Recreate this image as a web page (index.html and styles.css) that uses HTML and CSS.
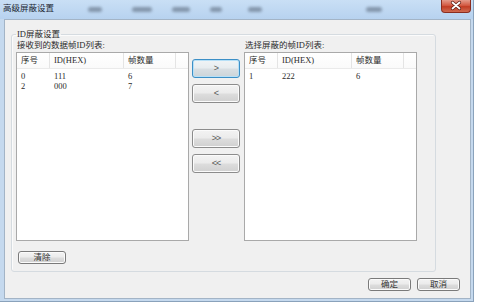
FILE: index.html
```html
<!DOCTYPE html>
<html lang="zh-CN">
<head>
<meta charset="utf-8">
<title>高级屏蔽设置</title>
<link rel="stylesheet" href="styles.css">
</head>
<body>
<div class="window">
  <div class="titlebar">
    <span class="title">高级屏蔽设置</span>
    <span class="blob b1"></span>
    <span class="blob b2"></span>
    <span class="blob b3"></span>
    <span class="blob b4"></span>
    <span class="blob b5"></span>
    <span class="blob b6"></span>
    <span class="close">
      <svg width="30" height="13" viewBox="0 0 30 13">
        <path d="M11.5 3.5 L18.5 9.5 M18.5 3.5 L11.5 9.5" stroke="#5a1a10" stroke-width="3.2" stroke-linecap="round"/>
        <path d="M11.5 3.5 L18.5 9.5 M18.5 3.5 L11.5 9.5" stroke="#ffffff" stroke-width="1.8" stroke-linecap="round"/>
      </svg>
    </span>
  </div>
  <div class="client">
    <fieldset class="group">
      <legend class="legend">ID屏蔽设置</legend>
      <div class="lists">
        <div class="col">
          <div class="col-label">接收到的数据帧ID列表:</div>
          <div class="listview">
            <div class="lv-head">
              <span class="hc">序号</span>
              <span class="hc">ID(HEX)</span>
              <span class="hc">帧数量</span>
              <span class="hc"></span>
            </div>
            <div class="lv-row">
              <span class="c">0</span><span class="c">111</span><span class="c">6</span><span class="c"></span>
            </div>
            <div class="lv-row">
              <span class="c">2</span><span class="c">000</span><span class="c">7</span><span class="c"></span>
            </div>
          </div>
        </div>
        <div class="mid">
          <button class="btn arrow focus">&gt;</button>
          <button class="btn arrow">&lt;</button>
          <button class="btn arrow gap">&gt;&gt;</button>
          <button class="btn arrow">&lt;&lt;</button>
        </div>
        <div class="col">
          <div class="col-label">选择屏蔽的帧ID列表:</div>
          <div class="listview">
            <div class="lv-head">
              <span class="hc">序号</span>
              <span class="hc">ID(HEX)</span>
              <span class="hc">帧数量</span>
              <span class="hc"></span>
            </div>
            <div class="lv-row">
              <span class="c">1</span><span class="c">222</span><span class="c">6</span><span class="c"></span>
            </div>
          </div>
        </div>
      </div>
      <button class="btn small clear">清除</button>
    </fieldset>
    <div class="footer">
      <button class="btn small ok">确定</button>
      <button class="btn small cancel">取消</button>
    </div>
  </div>
</div>
</body>
</html>
```
FILE: styles.css
```css
* { box-sizing: border-box; }
html, body {
  margin: 0;
  padding: 0;
  background: #ffffff;
}
body {
  width: 478px;
  height: 306px;
  overflow: hidden;
  font-family: "Liberation Serif", "Noto Sans CJK SC", serif;
  font-size: 8.5px;
  color: #2a2a2a;
}
.window {
  width: 474px;
  height: 302px;
  background: #c5d9ee;
  display: flex;
  flex-direction: column;
  border-right: 1px solid #8aa2bb;
  border-bottom: 1px solid #8aa2bb;
}
.titlebar {
  height: 19px;
  display: flex;
  align-items: flex-start;
  background: linear-gradient(#c9dff5, #b7d2ef);
}
.title {
  width: 50px;
  margin-left: 3px;
  padding-top: 3px;
  line-height: 10px;
  color: #1c2733;
  white-space: nowrap;
}
.blob {
  height: 5px;
  margin-top: 7px;
  background: #6a7a8e;
  border-radius: 3px;
  filter: blur(1.6px);
  opacity: 0.7;
}
.b1 { margin-left: 35px; width: 14px; }
.b2 { margin-left: 30px; width: 20px; }
.b3 { margin-left: 20px; width: 18px; }
.b4 { margin-left: 20px; width: 12px; }
.b5 { margin-left: 26px; width: 14px; }
.b6 { margin-left: 104px; width: 16px; }
.close {
  margin-left: auto;
  margin-right: 2px;
  width: 30px;
  height: 13px;
  display: block;
  background: linear-gradient(#e49a8a 0%, #d35a43 45%, #c23c24 55%, #cf6a50 100%);
  border: 1px solid #8a2d1f;
  border-top: none;
  border-radius: 0 0 4px 4px;
  overflow: hidden;
}
.close svg { display: block; margin: -1px 0 0 -1px; }
.client {
  flex: 1;
  margin: 0 2px 2px 4px;
  background: #f0f0f0;
  border: 1px solid #a3b4c6;
  display: flex;
  flex-direction: column;
}
.group {
  margin: 9px 0 0 6px;
  width: 425px;
  padding: 0 0 7px 4px;
  border: 1px solid #d5dbe0;
  border-radius: 3px;
  box-shadow: inset 1px 1px 0 #fbfbfb;
  min-width: 0;
}
.legend {
  padding: 0 1px;
  margin: 0;
  line-height: 10px;
  color: #2a2a2a;
}
.lists {
  display: flex;
  align-items: flex-start;
}
.col {
  width: 173px;
  display: flex;
  flex-direction: column;
}
.col-label {
  height: 13px;
  line-height: 11px;
  padding-top: 1px;
  padding-left: 1px;
  white-space: nowrap;
}
.listview {
  height: 189px;
  background: #ffffff;
  border: 1px solid #a9a9a9;
}
.lv-head, .lv-row {
  display: grid;
  grid-template-columns: 33px 74px 52px 1fr;
}
.lv-head {
  height: 16px;
  border-bottom: 1px solid #eaeaea;
  background: linear-gradient(#ffffff, #fafafa);
}
.hc {
  line-height: 15px;
  padding-left: 4px;
  border-right: 1px solid #e4e4e4;
  color: #2a2a2a;
  white-space: nowrap;
}
.hc:last-child { border-right: none; }
.lv-row {
  height: 10px;
  line-height: 10px;
}
.lv-head + .lv-row { margin-top: 2px; }
.c {
  padding-left: 4px;
  white-space: nowrap;
}
.mid {
  width: 48px;
  margin: 0 4px 0 3px;
  padding-top: 20px;
  display: flex;
  flex-direction: column;
  gap: 6px;
}
.btn {
  margin: 0;
  padding: 0;
  font-family: "Liberation Serif", "Noto Sans CJK SC", serif;
  font-size: 8.5px;
  color: #333333;
  border: 1px solid #7a7a7a;
  border-radius: 3px;
  background: linear-gradient(#f3f3f3 0%, #ebebeb 48%, #dddddd 52%, #d0d0d0 100%);
  box-shadow: inset 0 0 0 1px #fbfbfb;
}
.arrow {
  height: 19px;
  width: 48px;
  line-height: 17px;
  font-family: "Liberation Sans", sans-serif;
  font-size: 9px;
  color: #5a5a5a;
  letter-spacing: -1px;
  border-color: #8c8c8c;
}
.arrow.focus {
  border-color: #3c8fc6;
  box-shadow: inset 0 0 0 1px #b7e0f7;
  background: linear-gradient(#f0f4f6 0%, #e7ecef 48%, #d9dfe3 52%, #ccd4d9 100%);
}
.arrow.gap { margin-top: 20px; }
.small {
  height: 13px;
  line-height: 11px;
}
.clear {
  width: 48px;
  margin: 10px 0 0 2px;
  display: block;
}
.footer {
  display: flex;
  justify-content: flex-end;
  gap: 6px;
  margin-top: 6px;
  padding-right: 10px;
}
.ok { width: 43px; }
.cancel { width: 43px; }
```
